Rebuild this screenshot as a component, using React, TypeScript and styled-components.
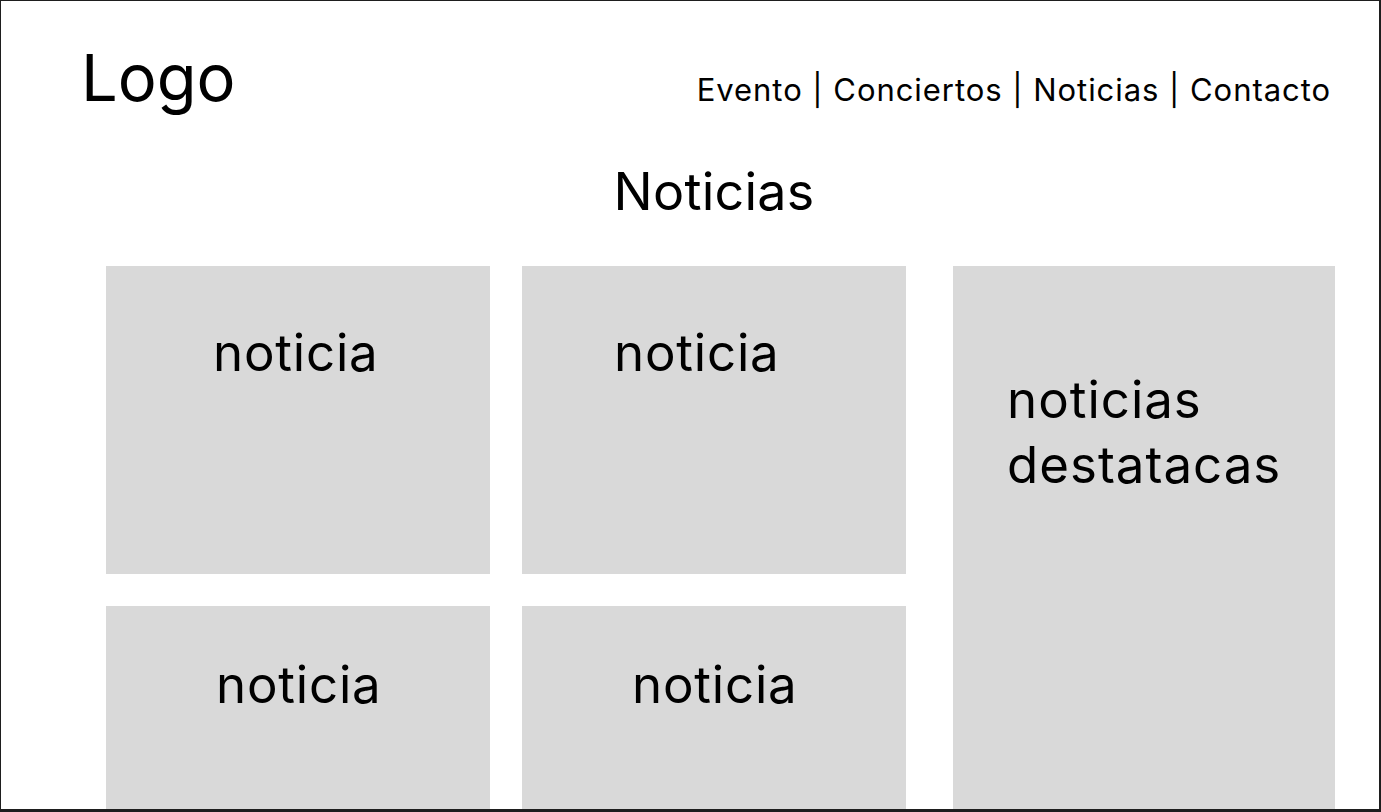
import React from "react";
import styled, { createGlobalStyle } from "styled-components";

const Global = createGlobalStyle`
  html, body { margin: 0; padding: 0; background: #ffffff; }
  body { font-family: Inter, "Noto Sans", sans-serif; color: #000; }
  * { box-sizing: border-box; }
`;

const Frame = styled.div`
  width: 1381px;
  height: 812px;
  border-style: solid;
  border-color: #1e1e1e;
  border-width: 1px 2px 3px 1px;
  background: #fff;
  overflow: hidden;
  display: flex;
  flex-direction: column;
`;

const Header = styled.header`
  display: flex;
  justify-content: space-between;
  align-items: baseline;
  padding: 37px 48px 0 80px;
`;

const Logo = styled.div`
  font-size: 65px;
  line-height: 80px;
  font-weight: 400;
`;

const Nav = styled.nav`
  display: flex;
  align-items: baseline;
  font-size: 31px;
  line-height: 38px;
  letter-spacing: 0.95px;
  white-space: pre;
`;

const NavLink = styled.a`
  color: #000;
  text-decoration: none;
`;

const Sep = styled.span`
  color: #000;
`;

const Main = styled.main`
  display: flex;
  flex-direction: column;
  padding-left: 105px;
`;

const TitleRow = styled.div`
  display: grid;
  grid-template-columns: 384px 384px;
  column-gap: 32px;
  margin-top: 42px;
`;

const Title = styled.h1`
  grid-column: 2;
  margin: 0;
  text-align: center;
  font-size: 52px;
  line-height: 64px;
  font-weight: 400;
  letter-spacing: 0.25px;
`;

const Content = styled.div`
  display: flex;
  gap: 47px;
  margin-top: 42px;
`;

const NewsGrid = styled.div`
  display: grid;
  grid-template-columns: 384px 384px;
  grid-auto-rows: 308px;
  gap: 32px;
`;

const Card = styled.div<{ $padTop: number; $padLeft: number }>`
  background: #d9d9d9;
  padding: ${(p) => p.$padTop}px 0 0 ${(p) => p.$padLeft}px;
  font-size: 51px;
  line-height: 62px;
  letter-spacing: 0.8px;
`;

const Featured = styled.aside`
  width: 382px;
  height: 620px;
  background: #d9d9d9;
  padding: 101px 0 0 54px;
  font-size: 51px;
  line-height: 65px;
  letter-spacing: 1px;
`;

const links = ["Evento", "Conciertos", "Noticias", "Contacto"];

const cards = [
  { top: 56, left: 107 },
  { top: 56, left: 92 },
  { top: 48, left: 110 },
  { top: 48, left: 110 },
];

export default function App() {
  return (
    <>
      <Global />
      <Frame>
        <Header>
          <Logo>Logo</Logo>
          <Nav>
            {links.map((l, i) => (
              <React.Fragment key={l}>
                {i > 0 && <Sep> | </Sep>}
                <NavLink href="#">{l}</NavLink>
              </React.Fragment>
            ))}
          </Nav>
        </Header>
        <Main>
          <TitleRow>
            <Title>Noticias</Title>
          </TitleRow>
          <Content>
            <NewsGrid>
              {cards.map((c, i) => (
                <Card key={i} $padTop={c.top} $padLeft={c.left}>
                  noticia
                </Card>
              ))}
            </NewsGrid>
            <Featured>
              noticias
              <br />
              destatacas
            </Featured>
          </Content>
        </Main>
      </Frame>
    </>
  );
}
